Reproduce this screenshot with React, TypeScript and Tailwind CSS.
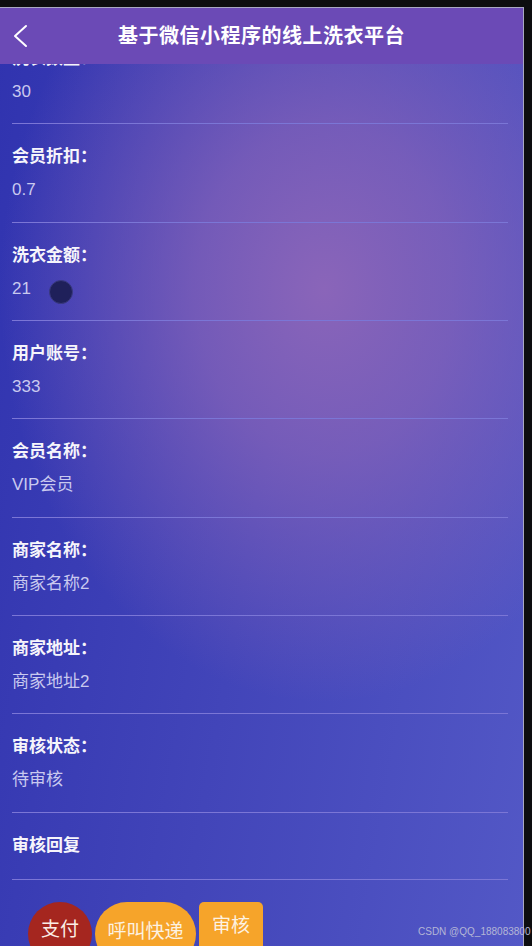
import React from 'react';

interface Field {
  label: string;
  value?: string;
  dot?: boolean;
}

const fields: Field[] = [
  { label: '洗衣数量：', value: '30' },
  { label: '会员折扣：', value: '0.7' },
  { label: '洗衣金额：', value: '21', dot: true },
  { label: '用户账号：', value: '333' },
  { label: '会员名称：', value: 'VIP会员' },
  { label: '商家名称：', value: '商家名称2' },
  { label: '商家地址：', value: '商家地址2' },
  { label: '审核状态：', value: '待审核' },
  { label: '审核回复' },
];

const FieldRow = ({ field }: { field: Field }) => (
  <div
    className={`ml-[12px] mr-[15px] pt-[21px] border-b border-[#7b76d6] ${field.value ? 'pb-[19.35px]' : 'pb-[21px]'}`}
  >
    <div className="text-[17px] leading-[24px] font-bold text-[#f6f5fb]">{field.label}</div>
    {field.value && (
      <div className="mt-[9px] flex items-center h-[24px] text-[17px] leading-[24px] text-[#c9c9ef]">
        <span>{field.value}</span>
        {field.dot && (
          <span className="relative top-[3px] ml-[18px] inline-block w-[24px] h-[24px] rounded-full bg-[#1f205a] border border-[#3a3a80]" />
        )}
      </div>
    )}
  </div>
);

const App = () => {
  return (
    <div
      className="relative w-[532px] h-[946px] overflow-hidden bg-[#0d0d0f] pt-[7px] pr-[8px]"
      style={{ fontFamily: '"Liberation Sans", "Noto Sans CJK SC", sans-serif' }}
    >
      <div className="relative h-full overflow-hidden border-t border-r border-[#a9a8c2] bg-[radial-gradient(ellipse_62%_44%_at_62%_30%,#8a65b9_0%,rgba(138,101,185,0.7)_40%,rgba(138,101,185,0)_100%),linear-gradient(100deg,#3033af_0%,#4245b9_50%,#5358c6_100%)]">
        {/* header overlays the scrolled list */}
        <div className="absolute top-0 inset-x-0 z-10 h-[56px] bg-[#6b4ab6] flex items-center justify-center">
          <svg className="absolute left-[10px] top-[16px]" width="20" height="24" viewBox="0 0 20 24" fill="none">
            <polyline points="16,2 5,12 16,22" stroke="#ffffff" strokeWidth="2" strokeLinecap="round" strokeLinejoin="round" />
          </svg>
          <span className="text-[20px] font-bold text-white tracking-[0.5px]">基于微信小程序的线上洗衣平台</span>
        </div>

        <div className="mt-[18px]">
          {fields.map((f) => (
            <FieldRow key={f.label} field={f} />
          ))}
        </div>

        <div className="flex items-start pl-[28px] pt-[22px] gap-[3px]">
          <button className="w-[64px] h-[64px] rounded-full bg-[#a5261f] text-[19px] text-[#fbeee6] pb-[8px]">支付</button>
          <button className="w-[101px] h-[64px] rounded-full bg-[#f6a42a] text-[19px] text-[#fdf2e2] pb-[4px]">呼叫快递</button>
          <button className="w-[64px] h-[56px] rounded-[5px] bg-[#f6a42a] text-[19px] text-[#fdf2e2] flex items-start justify-center pt-[10px]">审核</button>
        </div>
      </div>

      <div className="absolute left-[418px] top-[926px] text-[10px] leading-[12px] text-[#b4b6d6]">CSDN @QQ_188083800</div>
    </div>
  );
};

export default App;
